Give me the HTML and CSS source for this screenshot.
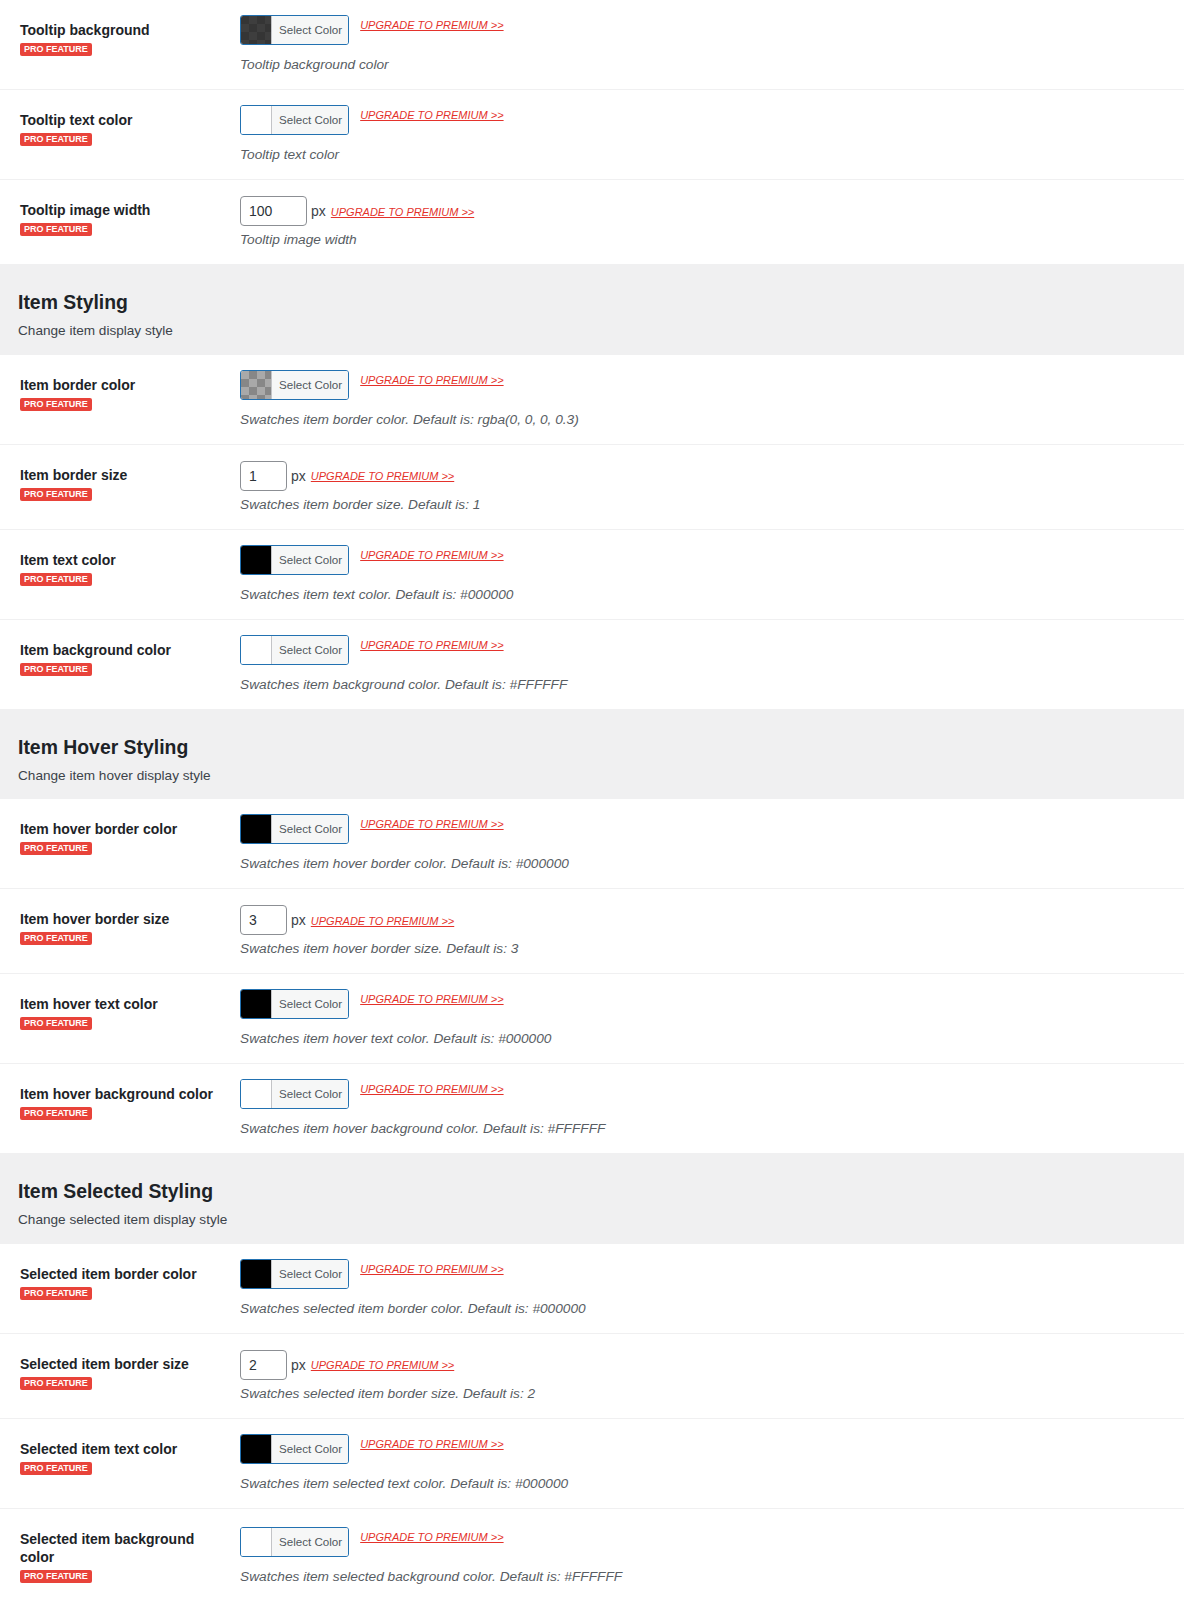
FILE: index.html
```html
<!DOCTYPE html>
<html lang="en">
<head>
<meta charset="utf-8">
<title>Swatches settings</title>
<link rel="stylesheet" href="styles.css">
</head>
<body>
<div class="settings">

  <table class="form-table">
    <tr>
      <th><span class="label">Tooltip background</span><span class="badge">PRO FEATURE</span></th>
      <td>
        <div class="picker"><span class="color-result"><span class="swatch sw-tooltip"></span><span class="result-text">Select Color</span></span><a class="upgrade" href="#">UPGRADE TO PREMIUM &gt;&gt;</a></div>
        <p class="description">Tooltip background color</p>
      </td>
    </tr>
    <tr>
      <th><span class="label">Tooltip text color</span><span class="badge">PRO FEATURE</span></th>
      <td>
        <div class="picker"><span class="color-result"><span class="swatch sw-white"></span><span class="result-text">Select Color</span></span><a class="upgrade" href="#">UPGRADE TO PREMIUM &gt;&gt;</a></div>
        <p class="description">Tooltip text color</p>
      </td>
    </tr>
    <tr>
      <th><span class="label">Tooltip image width</span><span class="badge">PRO FEATURE</span></th>
      <td>
        <div class="num"><input class="num-input wide" type="text" value="100"><span class="unit">px</span><a class="upgrade" href="#">UPGRADE TO PREMIUM &gt;&gt;</a></div>
        <p class="description">Tooltip image width</p>
      </td>
    </tr>
  </table>

  <div class="section-head">
    <h2>Item Styling</h2>
    <p>Change item display style</p>
  </div>

  <table class="form-table">
    <tr>
      <th><span class="label">Item border color</span><span class="badge">PRO FEATURE</span></th>
      <td>
        <div class="picker"><span class="color-result"><span class="swatch sw-alpha"></span><span class="result-text">Select Color</span></span><a class="upgrade" href="#">UPGRADE TO PREMIUM &gt;&gt;</a></div>
        <p class="description">Swatches item border color. Default is: rgba(0, 0, 0, 0.3)</p>
      </td>
    </tr>
    <tr>
      <th><span class="label">Item border size</span><span class="badge">PRO FEATURE</span></th>
      <td>
        <div class="num"><input class="num-input" type="text" value="1"><span class="unit">px</span><a class="upgrade" href="#">UPGRADE TO PREMIUM &gt;&gt;</a></div>
        <p class="description">Swatches item border size. Default is: 1</p>
      </td>
    </tr>
    <tr>
      <th><span class="label">Item text color</span><span class="badge">PRO FEATURE</span></th>
      <td>
        <div class="picker"><span class="color-result"><span class="swatch sw-black"></span><span class="result-text">Select Color</span></span><a class="upgrade" href="#">UPGRADE TO PREMIUM &gt;&gt;</a></div>
        <p class="description">Swatches item text color. Default is: #000000</p>
      </td>
    </tr>
    <tr>
      <th><span class="label">Item background color</span><span class="badge">PRO FEATURE</span></th>
      <td>
        <div class="picker"><span class="color-result"><span class="swatch sw-white"></span><span class="result-text">Select Color</span></span><a class="upgrade" href="#">UPGRADE TO PREMIUM &gt;&gt;</a></div>
        <p class="description">Swatches item background color. Default is: #FFFFFF</p>
      </td>
    </tr>
  </table>

  <div class="section-head">
    <h2>Item Hover Styling</h2>
    <p>Change item hover display style</p>
  </div>

  <table class="form-table">
    <tr>
      <th><span class="label">Item hover border color</span><span class="badge">PRO FEATURE</span></th>
      <td>
        <div class="picker"><span class="color-result"><span class="swatch sw-black"></span><span class="result-text">Select Color</span></span><a class="upgrade" href="#">UPGRADE TO PREMIUM &gt;&gt;</a></div>
        <p class="description">Swatches item hover border color. Default is: #000000</p>
      </td>
    </tr>
    <tr>
      <th><span class="label">Item hover border size</span><span class="badge">PRO FEATURE</span></th>
      <td>
        <div class="num"><input class="num-input" type="text" value="3"><span class="unit">px</span><a class="upgrade" href="#">UPGRADE TO PREMIUM &gt;&gt;</a></div>
        <p class="description">Swatches item hover border size. Default is: 3</p>
      </td>
    </tr>
    <tr>
      <th><span class="label">Item hover text color</span><span class="badge">PRO FEATURE</span></th>
      <td>
        <div class="picker"><span class="color-result"><span class="swatch sw-black"></span><span class="result-text">Select Color</span></span><a class="upgrade" href="#">UPGRADE TO PREMIUM &gt;&gt;</a></div>
        <p class="description">Swatches item hover text color. Default is: #000000</p>
      </td>
    </tr>
    <tr>
      <th><span class="label">Item hover background color</span><span class="badge">PRO FEATURE</span></th>
      <td>
        <div class="picker"><span class="color-result"><span class="swatch sw-white"></span><span class="result-text">Select Color</span></span><a class="upgrade" href="#">UPGRADE TO PREMIUM &gt;&gt;</a></div>
        <p class="description">Swatches item hover background color. Default is: #FFFFFF</p>
      </td>
    </tr>
  </table>

  <div class="section-head">
    <h2>Item Selected Styling</h2>
    <p>Change selected item display style</p>
  </div>

  <table class="form-table">
    <tr>
      <th><span class="label">Selected item border color</span><span class="badge">PRO FEATURE</span></th>
      <td>
        <div class="picker"><span class="color-result"><span class="swatch sw-black"></span><span class="result-text">Select Color</span></span><a class="upgrade" href="#">UPGRADE TO PREMIUM &gt;&gt;</a></div>
        <p class="description">Swatches selected item border color. Default is: #000000</p>
      </td>
    </tr>
    <tr>
      <th><span class="label">Selected item border size</span><span class="badge">PRO FEATURE</span></th>
      <td>
        <div class="num"><input class="num-input" type="text" value="2"><span class="unit">px</span><a class="upgrade" href="#">UPGRADE TO PREMIUM &gt;&gt;</a></div>
        <p class="description">Swatches selected item border size. Default is: 2</p>
      </td>
    </tr>
    <tr>
      <th><span class="label">Selected item text color</span><span class="badge">PRO FEATURE</span></th>
      <td>
        <div class="picker"><span class="color-result"><span class="swatch sw-black"></span><span class="result-text">Select Color</span></span><a class="upgrade" href="#">UPGRADE TO PREMIUM &gt;&gt;</a></div>
        <p class="description">Swatches item selected text color. Default is: #000000</p>
      </td>
    </tr>
    <tr>
      <th><span class="label">Selected item background color</span><span class="badge">PRO FEATURE</span></th>
      <td>
        <div class="picker"><span class="color-result"><span class="swatch sw-white"></span><span class="result-text">Select Color</span></span><a class="upgrade" href="#">UPGRADE TO PREMIUM &gt;&gt;</a></div>
        <p class="description">Swatches item selected background color. Default is: #FFFFFF</p>
      </td>
    </tr>
  </table>

</div>
</body>
</html>
```

FILE: styles.css
```css
* {
  box-sizing: border-box;
}

html, body {
  margin: 0;
  padding: 0;
  background: #ffffff;
}

body {
  font-family: "Liberation Sans", Arial, sans-serif;
  font-size: 14px;
  color: #1d2327;
}

.settings {
  width: 1184px;
}

.form-table {
  width: 100%;
  border-collapse: collapse;
  border-spacing: 0;
}

.form-table tr {
  border-bottom: 1px solid #f0f0f1;
}

.form-table th {
  width: 230px;
  padding: 21px 10px 20px 20px;
  text-align: left;
  vertical-align: top;
  font-weight: 600;
  line-height: 1.3;
}

.label {
  display: block;
  font-weight: bold;
  color: #1d2327;
  font-size: 14px;
}

.badge {
  display: inline-block;
  margin-top: 4px;
  padding: 0 4px;
  height: 13px;
  line-height: 13px;
  background: #e8433a;
  color: #ffffff;
  font-size: 9px;
  font-weight: bold;
  border-radius: 2px;
  vertical-align: top;
}

.form-table td {
  padding: 15px 10px;
  vertical-align: middle;
  line-height: 1.3;
}

.picker {
  display: flex;
  align-items: flex-start;
}

.color-result {
  display: inline-flex;
  height: 30px;
  margin: 0 6px 6px 0;
  border: 1px solid #2271b1;
  border-radius: 3px;
  overflow: hidden;
  background: #f6f7f7;
}

.swatch {
  display: block;
  width: 30px;
  height: 28px;
}

.sw-white {
  background: #ffffff;
}

.sw-black {
  background: #000000;
}

.sw-tooltip {
  background: repeating-conic-gradient(#3e3e3e 0 25%, #353535 0 50%) 0 0 / 16px 16px;
}

.sw-alpha {
  background: repeating-conic-gradient(#878787 0 25%, #a9a9a9 0 50%) 0 0 / 16px 16px;
}

.result-text {
  display: block;
  height: 28px;
  line-height: 28px;
  padding: 0 6px 0 7px;
  border-left: 1px solid #c3c4c7;
  background: #f6f7f7;
  color: #50575e;
  font-size: 11.6px;
}

.upgrade {
  display: inline-block;
  margin-left: 5px;
  margin-top: 4px;
  color: #e4322b;
  font-size: 11px;
  font-style: italic;
  line-height: 13px;
  text-decoration: underline;
}

.num {
  display: flex;
  align-items: center;
  height: 30px;
  margin: 1px 0 0;
  font-size: 14px;
  color: #3c434a;
}

.num-input {
  width: 47px;
  height: 30px;
  padding: 0 8px;
  border: 1px solid #8c8f94;
  border-radius: 4px;
  font-family: "Liberation Sans", Arial, sans-serif;
  font-size: 14px;
  color: #2c3338;
  background: #ffffff;
  margin: 0;
}

.num-input.wide {
  width: 67px;
}

.unit {
  margin-left: 4px;
  color: #3c434a;
}

.num .upgrade {
  margin: 2px 0 0 5px;
  line-height: 13px;
}

.description {
  margin: 4px 0 0;
  font-size: 13.7px;
  font-style: italic;
  line-height: 19px;
  color: #585d63;
}

.section-head {
  background: #f0f0f1;
  padding: 25px 18px 13px;
}

.section-head h2 {
  margin: 0 0 6px;
  font-size: 19.4px;
  font-weight: bold;
  line-height: 1.3;
  color: #1d2327;
}

.section-head p {
  margin: 0;
  font-size: 13.6px;
  line-height: 1.5;
  color: #3c434a;
}
```
